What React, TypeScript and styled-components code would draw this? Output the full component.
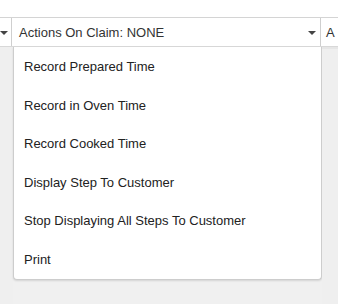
import React from 'react'
import styled, { createGlobalStyle } from 'styled-components'

const GlobalStyle = createGlobalStyle`
  html, body {
    margin: 0;
    padding: 0;
    background: #f0f0f0;
    font-family: Arial, "Liberation Sans", sans-serif;
  }
`

const actions = [
  'Record Prepared Time',
  'Record in Oven Time',
  'Record Cooked Time',
  'Display Step To Customer',
  'Stop Displaying All Steps To Customer',
  'Print',
]

function Caret() {
  return (
    <svg width="8" height="4" viewBox="0 0 8 4">
      <path d="M0 0 L8 0 L4 4 Z" fill="#444" />
    </svg>
  )
}

export default function App() {
  return (
    <Page>
      <GlobalStyle />
      <TopStrip />
      <FilterBar>
        <Select width={12} pad={0}>
          <CaretSlot>
            <Caret />
          </CaretSlot>
        </Select>
        <Select width={309} pad={7}>
          <Label>Actions On Claim: NONE</Label>
          <CaretSlot>
            <Caret />
          </CaretSlot>
        </Select>
        <Select width={17} pad={5} last>
          <Label>A</Label>
        </Select>
      </FilterBar>
      <Body>
        <Gutter />
        <Menu>
          {actions.map((a) => (
            <MenuItem key={a}>{a}</MenuItem>
          ))}
        </Menu>
        <RightPane />
      </Body>
    </Page>
  )
}

const Page = styled.div`
  width: 338px;
  height: 304px;
  overflow: hidden;
  background: #f0f0f0;
`

const TopStrip = styled.div`
  height: 17px;
  background: #fff;
`

const FilterBar = styled.div`
  display: flex;
  height: 28px;
  background: #fff;
  border-top: 1px solid #d4d4d4;
  border-bottom: 1px solid #d8d8d8;
`

const Select = styled.div<{ width: number; pad: number; last?: boolean }>`
  flex: 0 0 ${(p) => p.width}px;
  display: flex;
  align-items: center;
  overflow: hidden;
  box-sizing: border-box;
  border-right: ${(p) => (p.last ? 'none' : '1px solid #cfcfcf')};
  padding-left: ${(p) => p.pad}px;
  padding-right: ${(p) => (p.pad > 6 ? '4px' : '0')};
  background: #fff;
`

const Label = styled.span`
  flex: 1;
  font-size: 13px;
  color: #333;
  white-space: nowrap;
  padding-top: 1px;
`

const CaretSlot = styled.span`
  display: flex;
  align-items: center;
  width: 8px;
  padding-top: 2px;
`

const Body = styled.div`
  display: flex;
  height: 258px;
`

const Gutter = styled.div`
  flex: 0 0 13px;
  background: #efefef;
`

const Menu = styled.div`
  flex: 0 0 309px;
  box-sizing: border-box;
  align-self: flex-start;
  background: #fff;
  border: 1px solid #cdcdcd;
  border-top: none;
  border-radius: 0 0 4px 4px;
  box-shadow: 0 1px 2px rgba(0, 0, 0, 0.12);
  padding: 1px 0 0;
`

const MenuItem = styled.div`
  padding: 11px 10px;
  line-height: 16.5px;
  font-size: 13px;
  color: #222;
  white-space: nowrap;
`

const RightPane = styled.div`
  flex: 1;
  background: #efefef;
  border-top: 2px solid #e6e6e6;
`
